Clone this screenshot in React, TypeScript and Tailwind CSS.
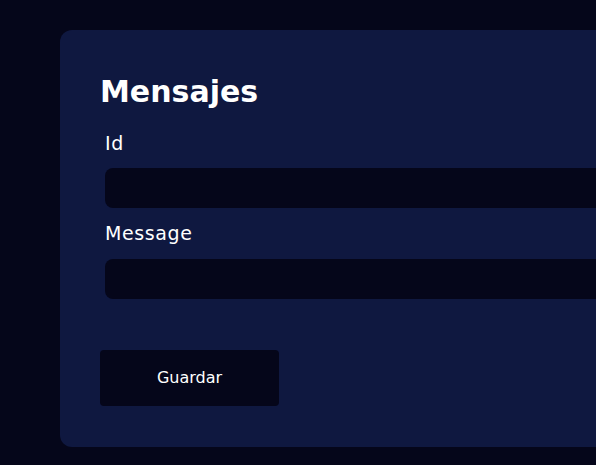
import React from "react";

const App = () => {
  return (
    <div
      className="min-h-screen bg-[#05061a] pl-[60px] pt-[30px] pb-[19px] overflow-hidden"
      style={{ fontFamily: '"DejaVu Sans", "Noto Sans", sans-serif' }}
    >
      <div className="w-[700px] bg-[#0f1840] rounded-xl pl-[40px] pr-[40px] pt-[44px] pb-[41px]">
        <h2 className="text-[30px] leading-9 font-bold text-white">Mensajes</h2>

        <form className="mt-[20px]">
          <div className="pl-[5px]">
            <label className="block text-[19px] leading-[27px] tracking-[0.6px] text-white mb-[11px]">Id</label>
            <input className="block w-full h-[40px] rounded-lg bg-[#05061a] outline-none text-white px-3" />
          </div>
          <div className="pl-[5px] mt-[12px]">
            <label className="block text-[19px] leading-[27px] tracking-[0.6px] text-white mb-[12px]">Message</label>
            <input className="block w-full h-[40px] rounded-lg bg-[#05061a] outline-none text-white px-3" />
          </div>
          <button
            type="button"
            className="mt-[51px] w-[179px] h-[56px] rounded bg-[#05061a] text-white text-[16px]"
          >
            Guardar
          </button>
        </form>
      </div>
    </div>
  );
};

export default App;
